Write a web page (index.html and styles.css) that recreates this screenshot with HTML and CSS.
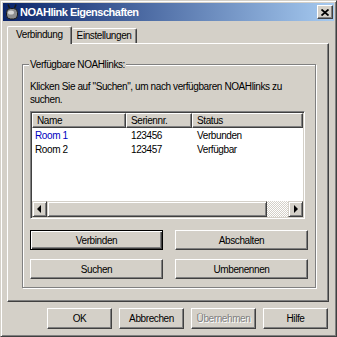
FILE: index.html
```html
<!DOCTYPE html>
<html lang="de">
<head>
    <meta charset="UTF-8">
    <title>NOAHlink Eigenschaften</title>
    <link rel="stylesheet" href="styles.css">
</head>
<body>
    <div class="window">
        <div class="titlebar">
            <svg class="app-icon" width="14" height="16" viewBox="0 0 14 16">
                <path d="M3 0.5 L4.5 4 M11 0.5 L9.5 4" stroke="#1a1a1a" stroke-width="1.6" fill="none"/>
                <rect x="1.5" y="4.5" width="11" height="10.5" rx="4" fill="#8e8e8e" stroke="#1a1a1a"/>
                <ellipse cx="6" cy="8.5" rx="3" ry="2" fill="#d6d6d6"/>
            </svg>
            <span class="title">NOAHlink Eigenschaften</span>
            <div class="close-btn">
                <svg width="8" height="7" viewBox="0 0 8 7">
                    <path d="M0.5 0.5 L7.5 6.5 M7.5 0.5 L0.5 6.5" stroke="#000" stroke-width="1.8"/>
                </svg>
            </div>
        </div>
        <div class="dialog">
            <div class="tabs">
                <div class="tab active">Verbindung</div>
                <div class="tab">Einstellungen</div>
            </div>
            <div class="panel">
                <div class="group">
                    <span class="group-label">Verfügbare NOAHlinks:</span>
                    <p class="hint">Klicken Sie auf &quot;Suchen&quot;, um nach verfügbaren NOAHlinks zu suchen.</p>
                    <div class="listview">
                        <div class="lv-header">
                            <div class="hcell col-name">Name</div>
                            <div class="hcell col-serial">Seriennr.</div>
                            <div class="hcell col-status">Status</div>
                        </div>
                        <div class="lv-body">
                            <div class="lv-row hot">
                                <span class="cell col-name">Room 1</span>
                                <span class="cell col-serial">123456</span>
                                <span class="cell col-status">Verbunden</span>
                            </div>
                            <div class="lv-row">
                                <span class="cell col-name">Room 2</span>
                                <span class="cell col-serial">123457</span>
                                <span class="cell col-status">Verfügbar</span>
                            </div>
                        </div>
                        <div class="hscroll">
                            <div class="sb-btn"><span class="arrow-left"></span></div>
                            <div class="sb-thumb"></div>
                            <div class="sb-track"></div>
                            <div class="sb-btn"><span class="arrow-right"></span></div>
                        </div>
                    </div>
                    <div class="actions">
                        <div class="btn default">Verbinden</div>
                        <div class="btn">Abschalten</div>
                        <div class="btn">Suchen</div>
                        <div class="btn">Umbenennen</div>
                    </div>
                </div>
            </div>
            <div class="footer">
                <div class="btn small">OK</div>
                <div class="btn small">Abbrechen</div>
                <div class="btn small disabled">Übernehmen</div>
                <div class="btn small">Hilfe</div>
            </div>
        </div>
    </div>
</body>
</html>
```

FILE: styles.css
```css
body {
    margin: 0;
    background-color: #d4d0c8;
    font-family: "Liberation Sans", Arial, sans-serif;
    font-size: 10px;
    letter-spacing: -0.4px;
    color: #000;
}
.window {
    width: 337px;
    height: 337px;
    box-sizing: border-box;
    padding: 2px;
    border: 1px solid;
    border-color: #d4d0c8 #404040 #404040 #d4d0c8;
    box-shadow: inset 1px 1px #fff, inset -1px -1px #808080;
    background-color: #d4d0c8;
}
.titlebar {
    height: 18px;
    display: flex;
    align-items: center;
    padding: 0 1px 0 2px;
    background: linear-gradient(to right, #0a246a, #a6caf0);
}
.app-icon {
    flex: none;
    margin-right: 1px;
}
.title {
    flex: 1;
    color: #fff;
    font-weight: bold;
    font-size: 11px;
    letter-spacing: -0.5px;
}
.close-btn {
    width: 16px;
    height: 14px;
    box-sizing: border-box;
    display: flex;
    align-items: center;
    justify-content: center;
    background-color: #d4d0c8;
    border: 1px solid;
    border-color: #fff #404040 #404040 #fff;
    box-shadow: inset -1px -1px #808080;
}
.dialog {
    padding: 5px 5px 0 4px;
}
.tabs {
    display: flex;
    align-items: flex-end;
    height: 17px;
}
.tab {
    height: 15px;
    box-sizing: border-box;
    padding: 1px 5px 0 5px;
    border-top: 1px solid #fff;
    border-right: 1px solid #404040;
    border-radius: 2px 2px 0 0;
    box-shadow: inset -1px 0 #808080;
}
.tab.active {
    position: relative;
    z-index: 1;
    height: 18px;
    margin-bottom: -1px;
    padding: 2px 8px 0 8px;
    border-left: 1px solid #fff;
    background-color: #d4d0c8;
}
.panel {
    height: 259px;
    box-sizing: border-box;
    padding: 20px 12px 0 14px;
    border: 1px solid;
    border-color: #fff #404040 #404040 #fff;
    box-shadow: inset -1px -1px #808080;
}
.group {
    position: relative;
    width: 294px;
    box-sizing: border-box;
    padding: 15px 7px 8px 7px;
    border: 1px solid #808080;
    box-shadow: inset 1px 1px #fff, 1px 1px #fff;
}
.group-label {
    position: absolute;
    top: -7px;
    left: 6px;
    padding: 0 1px;
    background-color: #d4d0c8;
    line-height: 13px;
}
.hint {
    margin: 0;
    line-height: 13px;
    width: 275px;
}
.listview {
    margin-top: 5px;
    width: 275px;
    height: 108px;
    box-sizing: border-box;
    padding: 1px;
    border: 1px solid;
    border-color: #808080 #fff #fff #808080;
    box-shadow: inset 1px 1px #404040, inset -1px -1px #d4d0c8;
    background-color: #fff;
    display: flex;
    flex-direction: column;
}
.lv-header {
    display: flex;
    height: 15px;
    flex: none;
}
.hcell {
    box-sizing: border-box;
    padding: 1px 0 0 4px;
    line-height: 12px;
    background-color: #d4d0c8;
    border: 1px solid;
    border-color: #fff #404040 #404040 #fff;
    box-shadow: inset -1px -1px #808080;
}
.col-name {
    width: 94px;
}
.col-serial {
    width: 66px;
}
.col-status {
    flex: 1;
}
.lv-body {
    flex: 1;
    padding-top: 1px;
}
.lv-row {
    display: flex;
    height: 14px;
    line-height: 14px;
}
.lv-row.hot {
    color: #0000c0;
}
.lv-row.hot .col-serial,
.lv-row.hot .col-status {
    color: #000;
}
.cell {
    box-sizing: border-box;
    padding-left: 5px;
}
.cell.col-name {
    padding-left: 3px;
}
.hscroll {
    display: flex;
    height: 16px;
    flex: none;
}
.sb-btn,
.sb-thumb {
    box-sizing: border-box;
    background-color: #d4d0c8;
    border: 1px solid;
    border-color: #d4d0c8 #404040 #404040 #d4d0c8;
    box-shadow: inset 1px 1px #fff, inset -1px -1px #808080;
}
.sb-btn {
    width: 15px;
    display: flex;
    align-items: center;
    justify-content: center;
}
.sb-thumb {
    flex: 1;
}
.sb-track {
    width: 21px;
    background: repeating-conic-gradient(#d4d0c8 0 25%, #fff 0 50%) 0 0 / 2px 2px;
}
.arrow-left {
    border-right: 4px solid #000;
    border-top: 4px solid transparent;
    border-bottom: 4px solid transparent;
    margin-right: 1px;
}
.arrow-right {
    border-left: 4px solid #000;
    border-top: 4px solid transparent;
    border-bottom: 4px solid transparent;
    margin-left: 1px;
}
.actions {
    margin-top: 11px;
    display: grid;
    grid-template-columns: 133px 133px;
    column-gap: 12px;
    row-gap: 9px;
}
.btn {
    height: 20px;
    box-sizing: border-box;
    display: flex;
    align-items: center;
    justify-content: center;
    background-color: #d4d0c8;
    border: 1px solid;
    border-color: #fff #404040 #404040 #fff;
    box-shadow: inset -1px -1px #808080;
}
.btn.default {
    border-color: #000;
    box-shadow: inset 1px 1px #fff, inset -1px -1px #404040, inset -2px -2px #808080;
}
.btn.disabled {
    color: #808080;
    text-shadow: 1px 1px #fff;
}
.footer {
    display: flex;
    justify-content: flex-end;
    gap: 7px;
    padding: 6px 1px 0 0;
}
.btn.small {
    width: 65px;
    height: 21px;
}
```
